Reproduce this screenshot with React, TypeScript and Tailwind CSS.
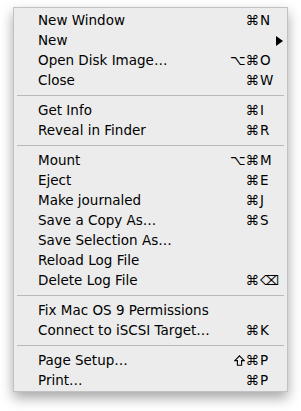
type Item =
  | { kind: 'item'; label: string; mods?: string; keyLabel?: string; submenu?: boolean }
  | { kind: 'sep' }

const ITEMS: Item[] = [
  { kind: 'item', label: 'New Window', mods: '⌘', keyLabel: 'N' },
  { kind: 'item', label: 'New', submenu: true },
  { kind: 'item', label: 'Open Disk Image…', mods: '⌥⌘', keyLabel: 'O' },
  { kind: 'item', label: 'Close', mods: '⌘', keyLabel: 'W' },
  { kind: 'sep' },
  { kind: 'item', label: 'Get Info', mods: '⌘', keyLabel: 'I' },
  { kind: 'item', label: 'Reveal in Finder', mods: '⌘', keyLabel: 'R' },
  { kind: 'sep' },
  { kind: 'item', label: 'Mount', mods: '⌥⌘', keyLabel: 'M' },
  { kind: 'item', label: 'Eject', mods: '⌘', keyLabel: 'E' },
  { kind: 'item', label: 'Make journaled', mods: '⌘', keyLabel: 'J' },
  { kind: 'item', label: 'Save a Copy As…', mods: '⌘', keyLabel: 'S' },
  { kind: 'item', label: 'Save Selection As…' },
  { kind: 'item', label: 'Reload Log File' },
  { kind: 'item', label: 'Delete Log File', mods: '⌘', keyLabel: '⌫' },
  { kind: 'sep' },
  { kind: 'item', label: 'Fix Mac OS 9 Permissions' },
  { kind: 'item', label: 'Connect to iSCSI Target…', mods: '⌘', keyLabel: 'K' },
  { kind: 'sep' },
  { kind: 'item', label: 'Page Setup…', mods: 'shift⌘', keyLabel: 'P' },
  { kind: 'item', label: 'Print…', mods: '⌘', keyLabel: 'P' },
]

function ShiftGlyph() {
  return (
    <svg width="11" height="11" viewBox="0 0 11 11" className="inline-block mr-[1px] align-[-1px]">
      <path d="M5.5 0.8 L10.2 5.6 L7.6 5.6 L7.6 10.2 L3.4 10.2 L3.4 5.6 L0.8 5.6 Z" fill="none" stroke="#000" strokeWidth="1.1" strokeLinejoin="miter" />
    </svg>
  )
}

export default function App() {
  return (
    <div className="w-[301px] h-[411px] bg-white pt-[7px] pl-[13px] font-['DejaVu_Sans',sans-serif] text-[13.5px] text-black">
      <div className="w-[275px] border border-[#c2c2c2] bg-[#ececec] pt-[2px] pb-[1px] shadow-[0_6px_12px_rgba(0,0,0,0.35)]">
        {ITEMS.map((item, i) => {
          if (item.kind === 'sep') {
            return (
              <div key={i} className="h-[10px] flex items-center px-[3px]">
                <div className="h-px w-full bg-[#b9b9b9]" />
              </div>
            )
          }
          return (
            <div key={i} className="h-[20px] flex items-center pl-[24px] pt-[2px] leading-none whitespace-nowrap">
              <span className="flex-1 min-w-0">{item.label}</span>
              <span className="shrink-0 text-right pr-[1px]">
                {item.mods?.startsWith('shift') ? (
                  <>
                    <ShiftGlyph />
                    {item.mods.slice(5)}
                  </>
                ) : (
                  item.mods
                )}
              </span>
              <span className="w-[27px] shrink-0 flex items-center">
                {item.submenu ? (
                  <svg width="23" height="10" viewBox="0 0 23 10" className="block">
                    <polygon points="16,0 23,5 16,10" fill="#000" />
                  </svg>
                ) : (
                  item.keyLabel
                )}
              </span>
            </div>
          )
        })}
      </div>
    </div>
  )
}
